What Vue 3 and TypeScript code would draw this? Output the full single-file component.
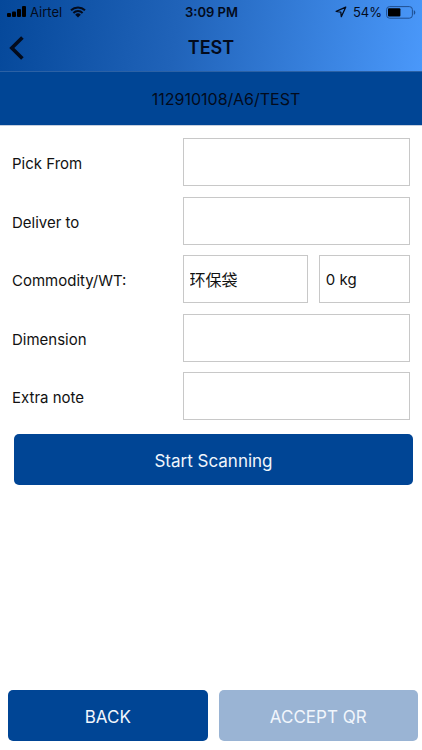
<script setup lang="ts">
import { ref } from 'vue'

interface Field {
  id: string
  label: string
  value: string
}

const reference = '112910108/A6/TEST'
const leading = ref<Field[]>([
  { id: 'pick-from', label: 'Pick From', value: '' },
  { id: 'deliver-to', label: 'Deliver to', value: '' },
])
const trailing = ref<Field[]>([
  { id: 'dimension', label: 'Dimension', value: '' },
  { id: 'extra-note', label: 'Extra note', value: '' },
])
const commodity = ref('环保袋')
const weight = ref('0 kg')
</script>

<template>
  <div class="screen">
    <header class="top">
      <div class="status">
        <div class="status-side">
          <svg class="signal" viewBox="0 0 20 12" aria-hidden="true">
            <rect x="0" y="7" width="4" height="4" rx="1" />
            <rect x="5" y="5.4" width="4" height="5.6" rx="1" />
            <rect x="10" y="3" width="4" height="8" rx="1" />
            <rect x="15" y="0" width="4" height="11" rx="1" />
          </svg>
          <span class="carrier">Airtel</span>
          <svg class="wifi" viewBox="0 0 16 12" aria-hidden="true">
            <path d="M1 4.2a10.2 10.2 0 0 1 14 0M3.4 6.9a6.7 6.7 0 0 1 9.2 0" />
            <path class="wifi-dot" d="M8 11.4 5.2 8.7a4 4 0 0 1 5.6 0z" />
          </svg>
        </div>
        <span class="time">3:09 PM</span>
        <div class="status-side status-end">
          <svg class="location" viewBox="0 0 12 12" aria-hidden="true">
            <path d="M10.7 1.2 1.2 5.4l4.6.7.5 4.6z" />
          </svg>
          <span class="percent">54%</span>
          <svg class="battery" viewBox="0 0 30 13" aria-hidden="true">
            <rect class="battery-case" x=".6" y=".6" width="25.8" height="11.6" rx="3" />
            <rect x="2" y="2.2" width="12.4" height="8.4" rx="1" />
            <path class="battery-tip" d="M27.8 4.2c2 .7 2 3.8 0 4.5z" />
          </svg>
        </div>
      </div>
      <div class="nav">
        <button class="nav-back" type="button" aria-label="Go back">
          <svg viewBox="0 0 16 24" aria-hidden="true"><path d="M13.4 1.4 2.8 12l10.6 10.6" /></svg>
        </button>
        <h1>TEST</h1>
      </div>
    </header>

    <div class="reference">{{ reference }}</div>

    <main>
      <form class="fields" @submit.prevent>
        <div v-for="field in leading" :key="field.id" class="row">
          <label :for="field.id">{{ field.label }}</label>
          <input :id="field.id" v-model="field.value" type="text" />
        </div>
        <div class="row">
          <label for="commodity">Commodity/WT:</label>
          <div class="pair">
            <input id="commodity" v-model="commodity" class="commodity" type="text" />
            <input v-model="weight" type="text" aria-label="Weight" />
          </div>
        </div>
        <div v-for="field in trailing" :key="field.id" class="row">
          <label :for="field.id">{{ field.label }}</label>
          <input :id="field.id" v-model="field.value" type="text" />
        </div>
      </form>
      <button class="action scan" type="button">Start Scanning</button>
    </main>

    <footer>
      <button class="action" type="button">BACK</button>
      <button class="action" type="button" disabled>ACCEPT QR</button>
    </footer>
  </div>
</template>

<style>
body {
  margin: 0;
  background: #fff;
}
</style>

<style scoped>
.screen {
  display: flex;
  flex-direction: column;
  min-height: 100vh;
  box-sizing: border-box;
  padding-bottom: 9px;
  font-family: Inter, "Noto Sans CJK SC", sans-serif;
  font-size: 15px;
  color: #111;
}
.top {
  background: linear-gradient(98deg, #05489a 0%, #2063b9 42%, #4a98fa 100%);
  border-bottom: 1px solid #2b61a5;
  color: #030b1c;
}
.status {
  display: grid;
  grid-template-columns: 1fr auto 1fr;
  align-items: center;
  height: 24px;
  padding: 0 6px 0 7px;
  font-size: 13px;
}
.status-side {
  display: flex;
  align-items: center;
}
.status-end {
  justify-content: flex-end;
}
.signal {
  width: 20px;
  height: 12px;
}
.carrier {
  margin: 0 8px 0 3px;
}
.wifi {
  width: 16px;
  height: 12px;
}
.wifi path {
  fill: none;
  stroke: #030b1c;
  stroke-width: 2;
}
.wifi .wifi-dot {
  fill: #030b1c;
  stroke: none;
}
.time {
  font-weight: 600;
}
.location {
  width: 12px;
  height: 12px;
  margin-right: 6px;
}
.location path {
  fill: none;
  stroke: #030b1c;
  stroke-width: 1.3;
  stroke-linejoin: round;
}
.percent {
  margin-right: 4px;
}
.battery {
  width: 30px;
  height: 13px;
}
.battery-case {
  fill: none;
  stroke: #1f4f91;
}
.battery-tip {
  fill: #1f4f91;
}
.nav {
  display: grid;
  grid-template-columns: 40px 1fr 40px;
  align-items: center;
  height: 47px;
}
.nav-back {
  display: flex;
  align-items: center;
  height: 44px;
  padding: 0 0 0 9px;
  border: 0;
  background: none;
}
.nav-back svg {
  width: 16px;
  height: 24px;
}
.nav-back path {
  fill: none;
  stroke: #030b1c;
  stroke-width: 3.6;
}
h1 {
  margin: 0;
  font-size: 18px;
  font-weight: 600;
  text-align: center;
}
.reference {
  display: flex;
  align-items: center;
  justify-content: center;
  height: 54px;
  padding-left: 30px;
  border-bottom: 1px solid #c5cfdf;
  box-sizing: border-box;
  background: #004595;
  color: #030b1c;
  font-size: 16px;
}
main {
  flex: 1;
  padding: 12px 0;
}
.fields {
  display: flex;
  flex-direction: column;
  justify-content: space-between;
  min-height: 282px;
  padding: 0 12px;
}
.row {
  display: grid;
  grid-template-columns: 3fr 4fr;
  align-items: center;
}
.row label {
  padding-top: 3px;
}
.pair {
  display: grid;
  grid-template-columns: 11fr 8fr;
  gap: 11px;
}
input {
  box-sizing: border-box;
  width: 100%;
  min-width: 0;
  height: 48px;
  padding: 0 6px;
  border: 1px solid #c8c8c8;
  border-radius: 0;
  background: #fff;
  color: #111;
  font: inherit;
}
.commodity {
  font-size: 16px;
}
.action {
  height: 51px;
  padding: 2px 0 0;
  border: 0;
  border-radius: 5px;
  background: #004595;
  color: #f1f6fc;
  font: inherit;
  font-size: 17px;
}
.action:disabled {
  background: #9ab4d4;
}
.scan {
  display: block;
  width: calc(100% - 23px);
  margin: 14px 9px 0 14px;
}
footer {
  display: grid;
  grid-template-columns: 1fr 1fr;
  gap: 11px;
  padding: 0 4px 0 8px;
}
</style>
